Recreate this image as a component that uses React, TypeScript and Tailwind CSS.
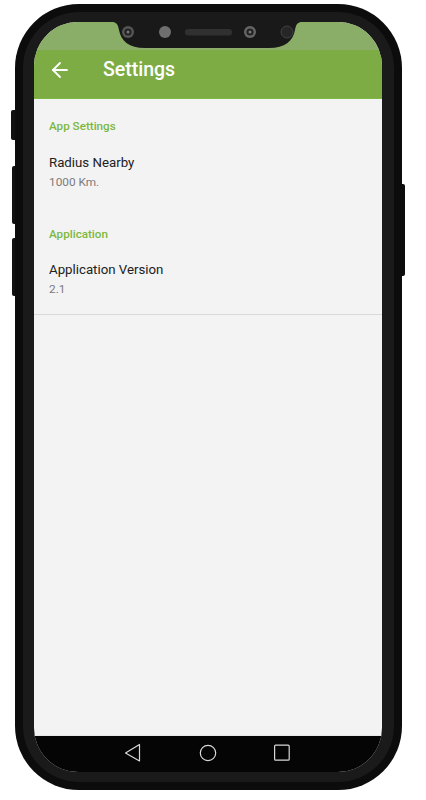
import { ArrowLeft } from "lucide-react";

function Notch() {
  return (
    <svg
      className="absolute left-[76px] top-0"
      width="194"
      height="27"
      viewBox="0 0 194 27"
      aria-hidden="true"
    >
      <path
        d="M2 0 H192 C188 0 186 2 185 8 C183 19 175 26 159 26 H35 C19 26 11 19 9 8 C8 2 6 0 2 0 Z"
        fill="#191919"
      />
      <circle cx="18" cy="10" r="6" fill="#555" />
      <circle cx="18" cy="10" r="3.6" fill="#222" />
      <circle cx="18" cy="10" r="1.5" fill="#777" />
      <circle cx="55" cy="10" r="6" fill="#6f6f6f" />
      <rect x="75" y="7" width="47" height="6.5" rx="3.2" fill="#303030" />
      <circle cx="140" cy="10" r="6" fill="#666" />
      <circle cx="140" cy="10" r="3.6" fill="#222" />
      <circle cx="140" cy="10" r="1.5" fill="#777" />
      <circle cx="177" cy="10" r="6" fill="#262626" stroke="#4a4a4a" strokeWidth="0.8" />
    </svg>
  );
}

function NavBar() {
  return (
    <div className="flex h-[37px] shrink-0 items-center justify-center gap-[52px] border-t border-[#e8e8e8] bg-[#050505] pb-[2px]">
      <svg width="22" height="22" viewBox="0 0 22 22" fill="none" stroke="#d8d8d8" strokeWidth="1.2" aria-hidden="true">
        <path d="M16.5 2.5 V19 L2.5 11 Z" strokeLinejoin="round" />
      </svg>
      <svg width="22" height="22" viewBox="0 0 22 22" fill="none" stroke="#d8d8d8" strokeWidth="1.2" aria-hidden="true">
        <circle cx="11" cy="11" r="7.7" />
      </svg>
      <svg width="22" height="22" viewBox="0 0 22 22" fill="none" stroke="#d8d8d8" strokeWidth="1.2" aria-hidden="true">
        <rect x="3.6" y="3.2" width="14.6" height="15" rx="1" />
      </svg>
    </div>
  );
}

function Row({ title, value }: { title: string; value: string }) {
  return (
    <div className="flex flex-col">
      <div className="text-[13.25px] leading-[20px] text-[#212121]">{title}</div>
      <div className="text-[11.8px] leading-[18px] text-[#7b7b7b]">{value}</div>
    </div>
  );
}

export default function App() {
  return (
    <div className="relative h-[800px] w-[426px] overflow-hidden bg-white font-['Roboto',sans-serif]">
      {/* side keys */}
      <div className="absolute left-[11px] top-[110px] h-[30px] w-[5px] rounded-l-[2px] bg-[#111111]" />
      <div className="absolute left-[12px] top-[166px] h-[58px] w-[4px] rounded-l-[2px] bg-[#111111]" />
      <div className="absolute left-[12px] top-[238px] h-[58px] w-[4px] rounded-l-[2px] bg-[#111111]" />
      <div className="absolute left-[401px] top-[184px] h-[92px] w-[4px] rounded-r-[2px] bg-[#0c0c0c]" />

      <div className="absolute left-[15px] top-[4px] h-[786px] w-[387px] rounded-[64px] bg-[#0c0c0c] p-[8px]">
        <div className="h-[770px] w-[371px] rounded-[56px] bg-[#1a1a1a] pl-[11px] pr-[12px] pt-[10px] pb-[11px]">
          <div className="relative flex h-[750px] w-[348px] flex-col overflow-hidden rounded-[44px] bg-[#f3f3f4]">
            <div className="h-[28px] shrink-0 bg-[#8aad67]" />
            <div className="flex h-[49px] shrink-0 items-center gap-[31px] border-b border-[#7fb840] bg-[#7cac43] pb-[8px] pl-[14px] text-white">
              <ArrowLeft size={24} strokeWidth={1.8} />
              <span className="text-[19.5px] font-medium leading-none">Settings</span>
            </div>
            <Notch />
            <div className="flex flex-1 flex-col">
              <div className="flex flex-col gap-[19px] px-[15px] pt-[19px]">
                <div className="text-[11.65px] font-medium leading-[16px] text-[#7cb83f]">App Settings</div>
                <Row title="Radius Nearby" value="1000 Km." />
              </div>
              <div className="flex flex-col gap-[18px] border-b border-[#d9d9d9] px-[15px] pb-[16px] pt-[35px]">
                <div className="text-[11.65px] font-medium leading-[16px] text-[#7cb83f]">Application</div>
                <Row title="Application Version" value="2.1" />
              </div>
            </div>
            <NavBar />
          </div>
        </div>
      </div>
    </div>
  );
}
